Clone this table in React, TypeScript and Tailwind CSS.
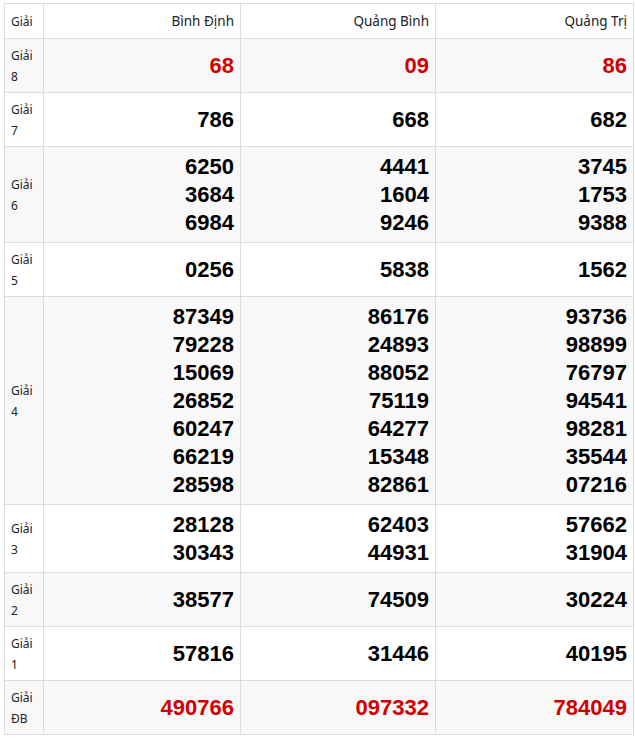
import React from "react";

interface Row {
    label: string;
    sub: string;
    values: string[][];
    red?: boolean;
}

const rows: Row[] = [
    { label: "Giải", sub: "8", values: [["68"], ["09"], ["86"]], red: true },
    { label: "Giải", sub: "7", values: [["786"], ["668"], ["682"]] },
    {
        label: "Giải",
        sub: "6",
        values: [
            ["6250", "3684", "6984"],
            ["4441", "1604", "9246"],
            ["3745", "1753", "9388"],
        ],
    },
    { label: "Giải", sub: "5", values: [["0256"], ["5838"], ["1562"]] },
    {
        label: "Giải",
        sub: "4",
        values: [
            ["87349", "79228", "15069", "26852", "60247", "66219", "28598"],
            ["86176", "24893", "88052", "75119", "64277", "15348", "82861"],
            ["93736", "98899", "76797", "94541", "98281", "35544", "07216"],
        ],
    },
    {
        label: "Giải",
        sub: "3",
        values: [
            ["28128", "30343"],
            ["62403", "44931"],
            ["57662", "31904"],
        ],
    },
    { label: "Giải", sub: "2", values: [["38577"], ["74509"], ["30224"]] },
    { label: "Giải", sub: "1", values: [["57816"], ["31446"], ["40195"]] },
    {
        label: "Giải",
        sub: "ĐB",
        values: [["490766"], ["097332"], ["784049"]],
        red: true,
    },
];

const provinces = ["Bình Định", "Quảng Bình", "Quảng Trị"];

export default function App() {
    return (
        <div className="bg-white pl-[4px] pt-[3px]" style={{ fontFamily: '"Noto Sans", sans-serif' }}>
            <table className="w-[629px] table-fixed border-collapse border border-[#dddddd] text-[#222222]">
                <colgroup>
                    <col className="w-[39px]" />
                    <col className="w-[197px]" />
                    <col className="w-[195px]" />
                    <col className="w-[198px]" />
                </colgroup>
                <thead>
                    <tr className="h-[35px]">
                        <th className="border border-[#dddddd] px-[6px] text-left text-[12px] font-normal leading-[21px]">
                            Giải
                        </th>
                        {provinces.map((p) => (
                            <th
                                key={p}
                                className="border border-[#dddddd] px-[6px] text-right text-[13.5px] font-normal leading-[21px]"
                            >
                                {p}
                            </th>
                        ))}
                    </tr>
                </thead>
                <tbody>
                    {rows.map((row, i) => (
                        <tr key={row.sub} className={i % 2 === 0 ? "bg-[#f8f8f8]" : "bg-white"}>
                            <td className="border border-[#dddddd] pt-[6px] pb-[5px] pl-[6px] pr-0 align-middle text-[12px] leading-[21px]">
                                {row.label}
                                <br />
                                {row.sub}
                            </td>
                            {row.values.map((nums, j) => (
                                <td
                                    key={j}
                                    className={`border border-[#dddddd] pt-[6px] pb-[5px] pr-[6px] text-right align-middle text-[22px] font-bold leading-[28px] ${
                                        row.red ? "text-[#d10000]" : "text-black"
                                    }`}
                                    style={{ fontFamily: '"Liberation Sans", Arial, sans-serif' }}
                                >
                                    {nums.map((n) => (
                                        <div key={n}>{n}</div>
                                    ))}
                                </td>
                            ))}
                        </tr>
                    ))}
                </tbody>
            </table>
        </div>
    );
}
